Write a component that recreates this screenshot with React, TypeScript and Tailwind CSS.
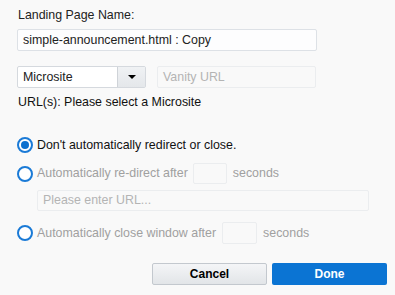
import React from "react";

const font = { fontFamily: '"Liberation Sans", Arial, sans-serif' };

function Radio({ checked }: { checked?: boolean }) {
  return (
    <span className="flex h-[16px] w-[16px] shrink-0 items-center justify-center rounded-full border-2 border-[#1a7ad6] bg-white">
      {checked && <span className="h-[8px] w-[8px] rounded-full bg-[#0b70cf]" />}
    </span>
  );
}

export default function App() {
  return (
    <div className="h-[295px] w-[395px] bg-[#f9f9f9] text-[12.4px] leading-[15px] text-black" style={font}>
      <div className="flex flex-col pl-[17px] pt-[8px]">
        <div className="pl-[1px] text-[#222]">Landing Page Name:</div>
        <div className="mt-[6px] flex h-[22px] w-[300px] items-center rounded-[2px] border border-[#dde1e6] bg-[#fdfdfe] pl-[5px] text-[#222]">
          simple-announcement.html : Copy
        </div>
        <div className="mt-[15px] flex h-[22px] items-stretch">
          <div className="flex w-[129px] items-stretch rounded-[2px] border border-[#d5d9de] bg-white">
            <div className="flex flex-1 items-center pl-[5px] text-[#222]">Microsite</div>
            <div className="flex w-[28px] items-center justify-center border-l border-[#cfd3d8] bg-gradient-to-b from-[#f0f2f4] to-[#e4e7ea]">
              <span className="h-0 w-0 border-l-[4px] border-r-[4px] border-t-[4px] border-l-transparent border-r-transparent border-t-black" />
            </div>
          </div>
          <div className="ml-[11px] flex w-[159px] items-center rounded-[2px] border border-[#ebedef] bg-[#f9f9f9] pl-[5px] text-[#b4b4b4]">
            Vanity URL
          </div>
        </div>
        <div className="mt-[7px] pl-[1px] text-[#111]">URL(s): Please select a Microsite</div>

        <div className="mt-[27px] flex h-[16px] items-center">
          <Radio checked />
          <span className="ml-[4px] text-[#111]">Don't automatically redirect or close.</span>
        </div>
        <div className="mt-[10px] flex h-[21px] items-center">
          <Radio />
          <span className="ml-[4px] text-[#a0a0a0]">Automatically re-direct after</span>
          <div className="ml-[5px] h-[21px] w-[34px] rounded-[2px] border border-[#ebedef] bg-[#f9f9f9]" />
          <span className="ml-[6px] text-[#a0a0a0]">seconds</span>
        </div>
        <div className="ml-[20px] mt-[6px] flex h-[21px] w-[332px] items-center rounded-[2px] border border-[#ebedef] bg-[#f9f9f9] pl-[5px] text-[#b4b4b4]">
          Please enter URL...
        </div>
        <div className="mt-[11px] flex h-[22px] items-center">
          <Radio />
          <span className="ml-[4px] text-[#a0a0a0]">Automatically close window after</span>
          <div className="ml-[6px] h-[22px] w-[35px] rounded-[2px] border border-[#ebedef] bg-[#f9f9f9]" />
          <span className="ml-[6px] text-[#a0a0a0]">seconds</span>
        </div>
        <div className="mt-[19px] flex justify-end gap-[5px] pr-[8px]">
          <button className="h-[22px] w-[115px] rounded-[2px] border border-[#c3c8ce] bg-gradient-to-b from-[#f4f5f7] to-[#e2e5e8] text-[12px] font-bold text-black">
            Cancel
          </button>
          <button className="h-[22px] w-[115px] rounded-[2px] bg-[#0b74d3] text-[12px] font-bold text-white">
            Done
          </button>
        </div>
      </div>
    </div>
  );
}
